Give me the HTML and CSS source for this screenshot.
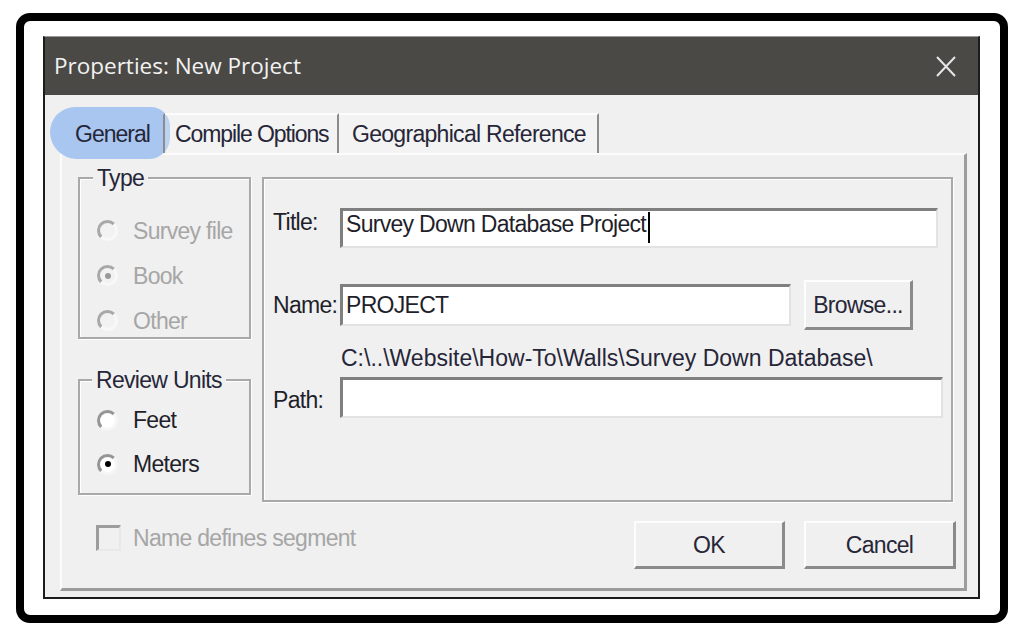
FILE: index.html
```html
<!DOCTYPE html>
<html>
<head>
<meta charset="utf-8">
<title>Properties: New Project</title>
<link rel="stylesheet" href="styles.css">
</head>
<body>
<div class="frame">
  <div class="dialog">
    <div class="titlebar">
      <span class="title">Properties: New Project</span>
      <svg class="close" viewBox="0 0 20 21"><path d="M1 1L19 20M19 1L1 20" stroke="#e6e6e6" stroke-width="2" fill="none"/></svg>
    </div>
    <div class="dbody">
      <div class="tabs">
        <div class="tab tab-general"><span class="hl"></span><span class="tlabel">General</span></div>
        <div class="tab tab-compile">Compile Options</div>
        <div class="tab tab-geo">Geographical Reference</div>
      </div>
      <div class="panel">
        <div class="upper">
          <div class="leftcol">
            <div class="group g-type">
              <span class="legend">Type</span>
              <div class="radio disabled"><span class="rb"></span><span>Survey file</span></div>
              <div class="radio disabled"><span class="rb on"></span><span>Book</span></div>
              <div class="radio disabled"><span class="rb"></span><span>Other</span></div>
            </div>
            <div class="group g-units">
              <span class="legend">Review Units</span>
              <div class="radio"><span class="rb"></span><span>Feet</span></div>
              <div class="radio"><span class="rb on"></span><span>Meters</span></div>
            </div>
          </div>
          <div class="group g-main">
            <div class="row row-title">
              <span class="lbl">Title:</span>
              <div class="field f-title">Survey Down Database Project<span class="caret"></span></div>
            </div>
            <div class="row row-name">
              <span class="lbl">Name:</span>
              <div class="field f-name">PROJECT</div>
              <div class="btn b-browse">Browse...</div>
            </div>
            <div class="pathtext">C:\..\Website\How-To\Walls\Survey Down Database\</div>
            <div class="row row-path">
              <span class="lbl">Path:</span>
              <div class="field f-path"></div>
            </div>
          </div>
        </div>
        <div class="lower">
          <div class="check disabled"><span class="box"></span><span>Name defines segment</span></div>
          <div class="buttons">
            <div class="btn b-ok">OK</div>
            <div class="btn b-cancel">Cancel</div>
          </div>
        </div>
      </div>
    </div>
  </div>
</div>
</body>
</html>
```
FILE: styles.css
```css
* { box-sizing: border-box; }
html, body { margin: 0; padding: 0; background: #fff; }
body {
  font-family: "Liberation Sans", Arial, sans-serif;
  font-size: 23px;
  line-height: 26px;
  letter-spacing: -0.7px;
  color: #1f1f2b;
}
.frame {
  margin: 13px 0 0 16px;
  width: 992px;
  height: 610px;
  border: 8px solid #000;
  border-radius: 14px;
  padding: 15px 0 0 19px;
}
.dialog {
  width: 937px;
  height: 563px;
  border: 2px solid #1c1c1c;
  border-top: 1px solid #9a9a9a;
  background: #f0f0f0;
  display: flex;
  flex-direction: column;
}
.titlebar {
  height: 58px;
  flex: none;
  background: #4a4945;
  display: flex;
  align-items: center;
  justify-content: space-between;
  padding: 0 22px 0 9px;
}
.title {
  font-family: "Open Sans", "Noto Sans", sans-serif;
  font-size: 22.5px;
  letter-spacing: 0;
  color: #f2f2f2;
}
.close { width: 20px; height: 21px; display: block; }
.dbody {
  flex: 1;
  padding: 18px 11px 6px 15px;
  display: flex;
  flex-direction: column;
}
.tabs {
  display: flex;
  height: 40px;
  flex: none;
  position: relative;
  z-index: 0;
}
.tab {
  height: 40px;
  border-right: 2px solid #8c8c8c;
  border-top: 2px solid rgba(255,255,255,0.7);
  background: rgba(255,255,255,0.22);
  display: flex;
  align-items: center;
  color: #262638;
}
.tab-general {
  width: 105px;
  padding-left: 15px;
  position: relative;
  background: transparent;
  border-top-color: transparent;
  letter-spacing: -1px;
}
.tab-compile { width: 174px; padding-left: 10px; letter-spacing: -1.1px; }
.tab-geo { width: 260px; padding-left: 13px; }
.hl {
  position: absolute;
  left: -10px;
  top: -8px;
  width: 120px;
  height: 52px;
  background: #a9c6f0;
  border-radius: 26px 20px 22px 28px;
  z-index: -1;
}
.tlabel { position: relative; }
.panel {
  flex: 1;
  border-style: solid;
  border-width: 2px 3px 3px 2px;
  border-color: #fcfcfc #9c9c9c #9c9c9c #fcfcfc;
  padding: 22px 11px 0 16px;
  display: flex;
  flex-direction: column;
}
.upper { display: flex; gap: 11px; }
.leftcol {
  width: 173px;
  display: flex;
  flex-direction: column;
  gap: 40px;
}
.group {
  position: relative;
  border: 2px solid #a9a9a9;
  box-shadow: inset 1px 1px 0 #fff, 1px 1px 0 #fff;
}
.g-type { height: 162px; padding: 29px 0 0 17px; }
.g-units { height: 116px; padding: 17px 0 0 17px; }
.legend {
  position: absolute;
  top: -14px;
  padding: 0 4px;
  background: #f0f0f0;
  color: #262638;
}
.g-type .legend { left: 13px; }
.g-units .legend { left: 12px; }
.radio {
  display: flex;
  align-items: center;
  height: 45px;
  gap: 15px;
}
.g-units .radio { height: 44px; }
.rb {
  width: 21px;
  height: 21px;
  flex: none;
  border-radius: 50%;
  border: 3px solid;
  border-color: #959595 #f6f6f6 #f6f6f6 #959595;
  background: #fff;
  position: relative;
}
.rb.on::after {
  content: "";
  position: absolute;
  left: 4.5px;
  top: 4.5px;
  width: 6px;
  height: 6px;
  border-radius: 50%;
  background: #000;
}
.disabled { color: #a6a6a6; }
.disabled .rb {
  background: #f2f2f2;
  border-color: #a8a8a8 #f8f8f8 #f8f8f8 #a8a8a8;
}
.disabled .rb.on::after { background: #9a9a9a; }
.g-main {
  width: 691px;
  height: 325px;
  padding: 29px 0 0 9px;
}
.row { display: flex; align-items: flex-start; }
.lbl { width: 67px; flex: none; }
.row-title .lbl { margin-top: 1px; }
.field {
  background: #fff;
  border-style: solid;
  border-width: 3px 2px 2px 3px;
  border-color: #7f7f7f #e2e2e2 #e2e2e2 #7f7f7f;
  padding-left: 3px;
  white-space: nowrap;
}
.f-title { width: 598px; height: 40px; padding-top: 0; }
.caret {
  display: inline-block;
  width: 2px;
  height: 31px;
  background: #000;
  vertical-align: -11px;
  margin-left: 2px;
}
.row-name { margin-top: 32px; }
.row-name .lbl { margin-top: 12px; }
.f-name { width: 451px; height: 42px; margin-top: 4px; padding-top: 5px; }
.btn {
  background: #f0f0f0;
  border-style: solid;
  border-width: 2px 3px 3px 2px;
  border-color: #fdfdfd #8a8a8a #8a8a8a #fdfdfd;
  display: flex;
  align-items: center;
  justify-content: center;
  color: #262638;
}
.b-browse { width: 109px; height: 50px; margin-left: 13px; }
.pathtext { margin: 15px 0 0 68px; letter-spacing: 0; color: #262638; white-space: nowrap; }
.row-path { margin-top: 6px; }
.row-path .lbl { margin-top: 10px; }
.f-path { width: 603px; height: 41px; }
.lower {
  display: flex;
  align-items: flex-start;
  margin: 19px -3px 0 18px;
}
.check {
  display: flex;
  align-items: center;
  gap: 12px;
  margin-top: 4px;
  height: 26px;
}
.box {
  width: 25px;
  height: 26px;
  border-style: solid;
  border-width: 3px 2px 2px 3px;
  border-color: #9c9c9c #e8e8e8 #e8e8e8 #9c9c9c;
}
.buttons { margin-left: auto; display: flex; gap: 19px; }
.b-ok { width: 151px; height: 48px; }
.b-cancel { width: 152px; height: 48px; }
```
